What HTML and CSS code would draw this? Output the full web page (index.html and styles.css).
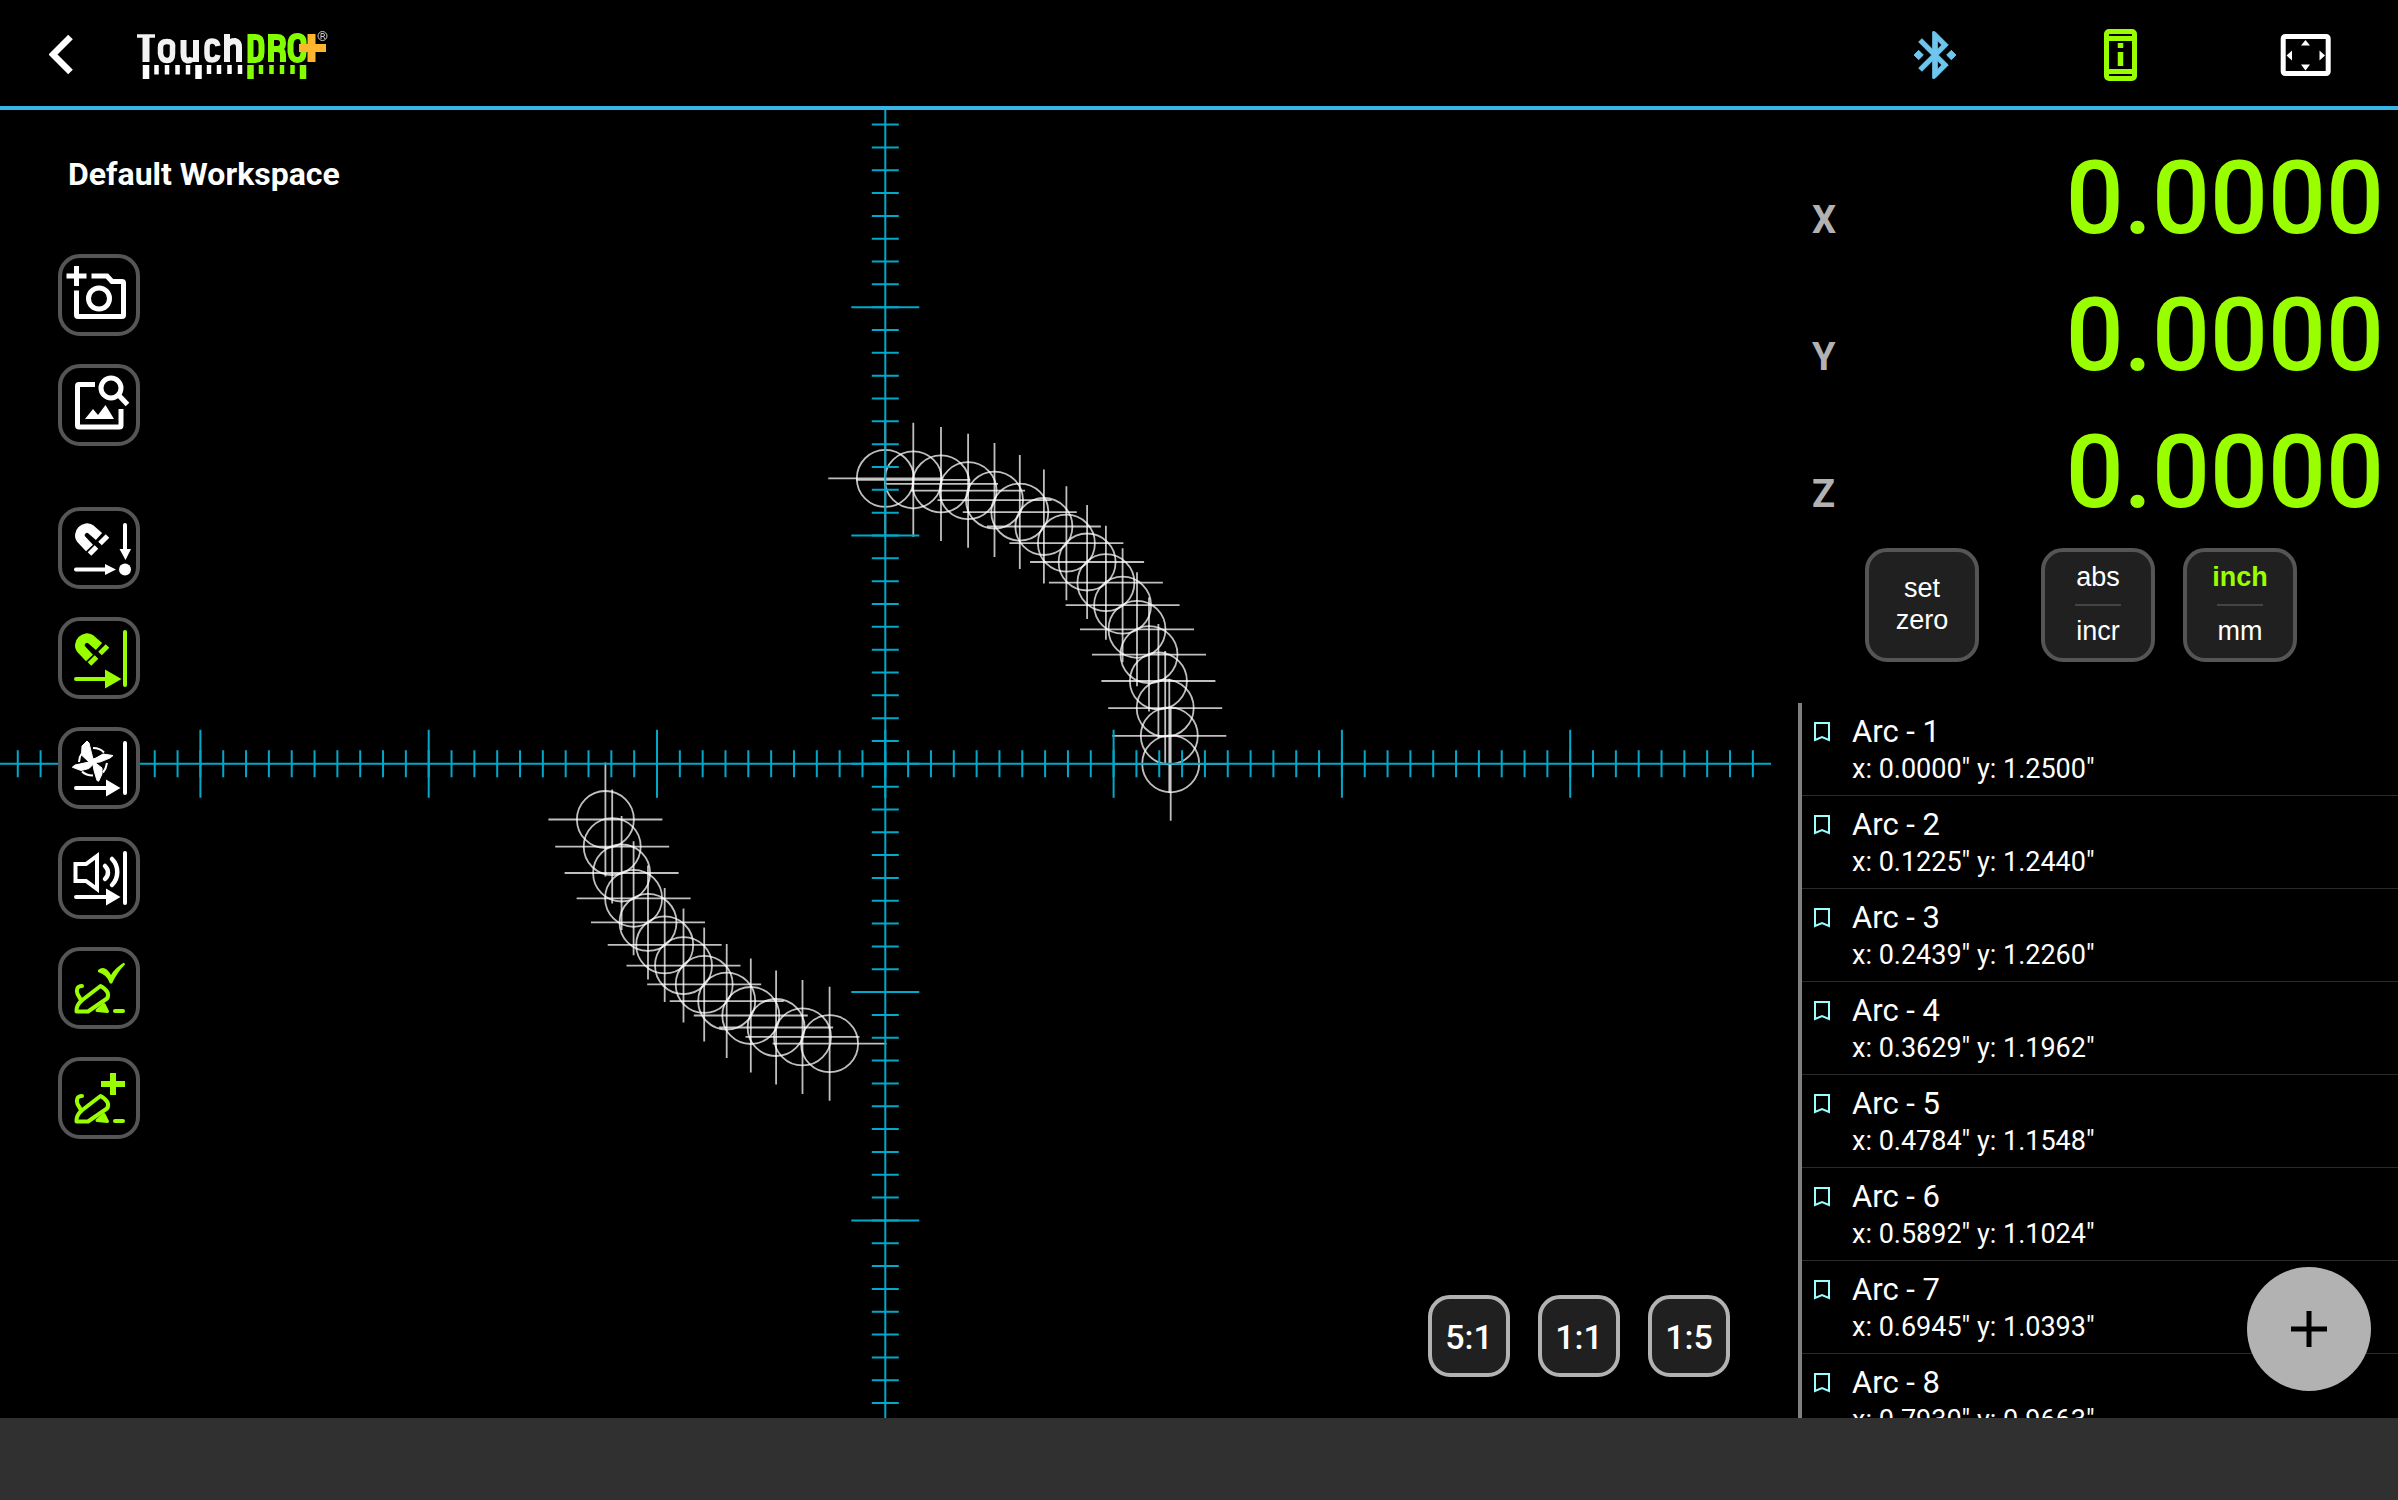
FILE: index.html
```html
<!DOCTYPE html>
<html lang="en">
<head>
<meta charset="utf-8">
<meta name="viewport" content="width=device-width, initial-scale=1">
<title>TouchDRO</title>
<link rel="stylesheet" href="styles.css">
</head>
<body>
<header class="topbar">
  <button class="icon-btn back" aria-label="Back">
    <svg width="26" height="42" viewBox="0 0 26 42"><path d="M21.500 3 4 20.500 21.500 38" fill="none" stroke="#fff" stroke-width="6.500"/></svg>
  </button>
  <a class="logo" href="#" aria-label="TouchDRO plus">
    <svg width="194" height="52" viewBox="0 0 194 52">
      <g fill="none" stroke="#f2f2f2" stroke-width="7">
        <path d="M0 5h18" stroke-width="3.500"/><path d="M9 4v27"/>
        <path d="M23.500 16.500q0-6 6.500-6t5.500 6v6q0 7-5.500 7t-6.500-7z" stroke-width="5.500"/>
        <path d="M46.500 9v13q0 7 3.500 7.500 4 .5 5-3M59 9v22" stroke-width="6"/>
        <path d="M81 15q-1-5-6-5t-5 6v7q0 6 5 6t6-5" stroke-width="5.500"/>
        <path d="M90 3v28M90 14q3-4 8-4 4 1 4 6v15" stroke-width="6"/>
      </g>
      <g fill="none" stroke="#84ff00" stroke-width="6">
        <path d="M113.500 6h5q6 0 6 8v7q0 8-6 8h-5z"/>
        <path d="M134 31V3M134 6h6q6 0 6 6t-6 6h-6M140 18q6 0 6 6v7"/>
        <path d="M153.500 14q0-9 7-9t6 9v7q0 8-6 8t-7-8z"/>
      </g>
      <path d="M174.500 3v28M162 17h27" stroke="#ffb52e" stroke-width="8"/>
      <circle cx="185.500" cy="5" r="4.500" fill="none" stroke="#ccc" stroke-width="1"/>
      <path d="M184 8V2.500h2q1.500 0 1.500 1.500t-1.500 1.500H184m2.500 0 1.500 2.500" fill="none" stroke="#ccc" stroke-width="1"/>
      <path d="M9 34v14M61.500 34v14" stroke="#fff" stroke-width="6.500"/>
      <path d="M19.500 34v9.500M30 34v9.500M40.500 34v9.500M51 34v9.500M72 34v9M82 34v9M92.500 34v9M103 34v9" stroke="#fff" stroke-width="4.500"/>
      <path d="M113.500 34v14M166 34v14" stroke="#84ff00" stroke-width="6.500"/>
      <path d="M124 34v9M134.500 34v9M145 34v9M155.500 34v9" stroke="#84ff00" stroke-width="4.500"/>
    </svg>
  </a>
  <nav class="actions">
    <button class="icon-btn" aria-label="Bluetooth">
      <svg width="56" height="56" viewBox="0 0 24 24" fill="#6ec6ee" stroke="#6ec6ee" stroke-width=".4"><path d="M7 12l-2-2-2 2 2 2 2-2zm10.710-4.290L12 2h-1v7.590L6.410 5 5 6.410 10.590 12 5 17.590 6.410 19 11 14.410V22h1l5.710-5.710-4.300-4.290 4.300-4.290zM13 5.830l1.880 1.880L13 9.590V5.830zm1.880 10.460L13 18.170v-3.760l1.880 1.880zM19 10l-2 2 2 2 2-2-2-2z"/></svg>
    </button>
    <button class="icon-btn" aria-label="Device information">
      <svg width="56" height="56" viewBox="0 0 56 56"><rect x="14.500" y="4.500" width="28" height="47" rx="2.500" fill="none" stroke="#9f0" stroke-width="5"/><path d="M16 11.500h25M16 44.500h25" stroke="#9f0" stroke-width="5"/><path d="M28.500 16v5M28.500 25v14" stroke="#9f0" stroke-width="5.500"/></svg>
    </button>
    <button class="icon-btn" aria-label="Fit to screen">
      <svg width="56" height="56" viewBox="0 0 56 56"><rect x="6.200" y="9.500" width="45" height="37" rx="2" fill="none" stroke="#fff" stroke-width="5"/><path d="M24 18.500h9l-4.500-5.500zM24 37.500h9l-4.500 6zM15 23.500v10l-5.500-5zM42.500 23.500v10l5.500-5z" fill="#fff"/></svg>
    </button>
  </nav>
</header>

<main class="workspace">
  <section class="canvas" aria-label="Plot">
    <svg class="plot" viewBox="-885.300 -653.800 1771 1308" preserveAspectRatio="xMidYMid slice">
      <defs>
        <g id="hole"><circle r="28.500"/><path d="M-57 0H57M0-57V57"/></g>
      </defs>
      <g class="holes">
        <use href="#hole" x="0" y="-285.400"/><use href="#hole" x="28" y="-284"/><use href="#hole" x="55.700" y="-279.900"/><use href="#hole" x="82.800" y="-273.100"/>
        <use href="#hole" x="109.200" y="-263.700"/><use href="#hole" x="134.500" y="-251.700"/><use href="#hole" x="158.600" y="-237.300"/><use href="#hole" x="181.100" y="-220.600"/>
        <use href="#hole" x="201.800" y="-201.800"/><use href="#hole" x="220.600" y="-181.100"/><use href="#hole" x="237.300" y="-158.600"/><use href="#hole" x="251.700" y="-134.500"/>
        <use href="#hole" x="263.700" y="-109.200"/><use href="#hole" x="273.100" y="-82.800"/><use href="#hole" x="279.900" y="-55.700"/><use href="#hole" x="284" y="-28"/><use href="#hole" x="285.400" y="0"/>
        <use href="#hole" x="-279.900" y="55.700"/><use href="#hole" x="-273.100" y="82.800"/><use href="#hole" x="-263.700" y="109.200"/><use href="#hole" x="-251.700" y="134.500"/>
        <use href="#hole" x="-237.300" y="158.600"/><use href="#hole" x="-220.600" y="181.100"/><use href="#hole" x="-201.800" y="201.800"/><use href="#hole" x="-181.100" y="220.600"/>
        <use href="#hole" x="-158.600" y="237.300"/><use href="#hole" x="-134.500" y="251.700"/><use href="#hole" x="-109.200" y="263.700"/><use href="#hole" x="-82.800" y="273.100"/><use href="#hole" x="-55.700" y="279.900"/>
      </g>
      <g class="axes">
        <path class="axis" d="M-1400 0H1400M0-1400V1400"/>
        <path class="minor" d="M-914.200 0H914.200M0-914.200V914.200"/>
        <path class="major" d="M-914.200 0H914.200M0-914.200V914.200"/>
      </g>
    </svg>

    <div class="tools">
      <h1 class="title">Default Workspace</h1>
      <div class="tool-group">
        <button class="tool" aria-label="Add snapshot">
          <svg viewBox="0 0 74 74" fill="none" stroke="#fff" stroke-width="5"><path d="M4.500 18h20M14.500 8v20M29.500 18H45l5 5.500h10q1.500 0 1.500 1.500v32q0 1.500-1.500 1.500H16q-1.500 0-1.500-1.500V32.500"/><circle cx="37" cy="40.500" r="10.500"/></svg>
        </button>
        <button class="tool" aria-label="View snapshots">
          <svg viewBox="0 0 74 74" fill="none" stroke="#fff" stroke-width="5"><path d="M33 16.500H17q-1.500 0-1.500 1.500v39.500q0 1.500 1.500 1.500h40.500q1.500 0 1.500-1.500V41"/><circle cx="49" cy="20" r="10"/><path d="m56 26.500 9.500 10"/><path d="m23 51 8-10 5 6 7.500-10L52 51z" fill="#fff" stroke="none"/></svg>
        </button>
      </div>
      <div class="tool-group">
        <button class="tool" aria-label="Snap to point">
          <svg viewBox="0 0 74 74" fill="none" stroke="#fff" stroke-width="4"><use href="#magnet"/><path d="M14 58.500h31M63 14v27" stroke-linecap="round"/><path d="M43 53v11l11-5.500zM57.500 38h11.500l-5.500 11z" fill="#fff" stroke="none"/><circle cx="63" cy="58.500" r="6" fill="#fff" stroke="none"/></svg>
        </button>
        <button class="tool" aria-label="Snap to line">
          <svg viewBox="0 0 74 74" fill="none" stroke="#9f0" stroke-width="4"><g id="magnet"><path d="m37 25.500-8-7c-6-5-15 4-9.500 10L27.500 37" stroke-width="9.500"/><path d="m38 32.500 7.500-7.500M27.500 43l7-7" stroke-width="5"/></g><path d="M14 58h31M63 11v53" stroke-linecap="round"/><path d="M43 48.500v19L59.500 58z" fill="#9f0" stroke="none"/></svg>
        </button>
        <button class="tool" aria-label="Cutter offset">
          <svg viewBox="0 0 74 74" fill="none" stroke="#fff" stroke-width="4"><path d="M31 17q7 0 11 4.500M45 32q-1 6-4 9.500M31 44.500q-7 0-11-4M17 31q0-5 3-9" stroke-width="2"/><path d="M25 10l2 2 4 16 3-1 7-4 10 1.500-3 2.500-10 4-5 .500 7 5.500v6l-3.300 7.200-1.700-.7-3-10-1-6-4 4-8 2-8.700-3.300 2.700-2.200 14-3-7.500-7 .5-9z" fill="#fff" stroke-width="1"/><path d="M14 57h31M63 12v50" stroke-linecap="round"/><path d="M44 48.500v17L58.500 57z" fill="#fff" stroke="none"/></svg>
        </button>
        <button class="tool" aria-label="Proximity sound">
          <svg viewBox="0 0 74 74" fill="none" stroke="#fff" stroke-width="4"><path d="M13.500 23H24l11-8v33l-11-8H13.500z"/><path d="M43 25c4 4 4 9 0 13M50 18c7 7 7 19 0 26" stroke-linecap="round" stroke-width="4.500"/><path d="M14 56h31M63 12v50" stroke-linecap="round"/><path d="M44 47.500v17L58.500 56z" fill="#fff" stroke="none"/></svg>
        </button>
        <button class="tool" aria-label="Apply tool">
          <svg viewBox="0 0 74 74" fill="none" stroke="#9f0" stroke-width="4"><g id="mill"><path d="M20 35c-5 0-6 4-4.500 8l4 7M38.500 35 19 50c-3 3-5 6-4.500 10.500H26l19-13c3-4 0-9-6.500-12.500z" stroke-linejoin="round" stroke-linecap="round"/><path d="m35 59.500 7-6 3.500 7z" fill="#9f0" stroke-width="3" stroke-linejoin="round"/><path d="M53 60h8" stroke-linecap="round"/></g><path d="M36 19q7-6 13 5 4-7 13-12.500l1 2q-8 8-13 19h-2q-3-9-12-11.500z" fill="#9f0" stroke="none"/></svg>
        </button>
        <button class="tool" aria-label="Add tool">
          <svg viewBox="0 0 74 74" fill="none" stroke="#9f0" stroke-width="4"><use href="#mill"/><path d="M39 23h24M51 12v22" stroke-width="6"/></svg>
        </button>
      </div>
    </div>

    <div class="scales">
      <button class="scale">5:1</button>
      <button class="scale">1:1</button>
      <button class="scale">1:5</button>
    </div>
  </section>

  <aside class="side">
    <dl class="readout">
      <div class="axis-row"><dt>X</dt><dd>0.0000</dd></div>
      <div class="axis-row"><dt>Y</dt><dd>0.0000</dd></div>
      <div class="axis-row"><dt>Z</dt><dd>0.0000</dd></div>
    </dl>
    <div class="modes">
      <button class="mode zero">set<br>zero</button>
      <button class="mode split"><span>abs</span><span>incr</span></button>
      <button class="mode split"><span class="on">inch</span><span>mm</span></button>
    </div>
    <ul class="points">
      <li class="point"><svg class="mark" viewBox="0 0 18 22"><path d="M2 2h14v17l-7-3-7 3z"/></svg><div><p class="name">Arc - 1</p><p class="coords">x: 0.0000" y: 1.2500"</p></div></li>
      <li class="point"><svg class="mark" viewBox="0 0 18 22"><path d="M2 2h14v17l-7-3-7 3z"/></svg><div><p class="name">Arc - 2</p><p class="coords">x: 0.1225" y: 1.2440"</p></div></li>
      <li class="point"><svg class="mark" viewBox="0 0 18 22"><path d="M2 2h14v17l-7-3-7 3z"/></svg><div><p class="name">Arc - 3</p><p class="coords">x: 0.2439" y: 1.2260"</p></div></li>
      <li class="point"><svg class="mark" viewBox="0 0 18 22"><path d="M2 2h14v17l-7-3-7 3z"/></svg><div><p class="name">Arc - 4</p><p class="coords">x: 0.3629" y: 1.1962"</p></div></li>
      <li class="point"><svg class="mark" viewBox="0 0 18 22"><path d="M2 2h14v17l-7-3-7 3z"/></svg><div><p class="name">Arc - 5</p><p class="coords">x: 0.4784" y: 1.1548"</p></div></li>
      <li class="point"><svg class="mark" viewBox="0 0 18 22"><path d="M2 2h14v17l-7-3-7 3z"/></svg><div><p class="name">Arc - 6</p><p class="coords">x: 0.5892" y: 1.1024"</p></div></li>
      <li class="point"><svg class="mark" viewBox="0 0 18 22"><path d="M2 2h14v17l-7-3-7 3z"/></svg><div><p class="name">Arc - 7</p><p class="coords">x: 0.6945" y: 1.0393"</p></div></li>
      <li class="point"><svg class="mark" viewBox="0 0 18 22"><path d="M2 2h14v17l-7-3-7 3z"/></svg><div><p class="name">Arc - 8</p><p class="coords">x: 0.7930" y: 0.9663"</p></div></li>
    </ul>
    <button class="fab" aria-label="Add point"><svg width="40" height="40" viewBox="0 0 40 40"><path d="M2 20h36M20 2v36" stroke="#000" stroke-width="5"/></svg></button>
  </aside>
</main>
<footer class="navbar"></footer>
</body>
</html>
```

FILE: styles.css
```css
* {
  box-sizing: border-box;
}

body {
  margin: 0;
  height: 100vh;
  display: flex;
  flex-direction: column;
  background: #000;
  color: #fff;
  font-family: Roboto, "Liberation Sans", sans-serif;
}

h1, p, dl, dd, ul {
  margin: 0;
  padding: 0;
}

button {
  margin: 0;
  padding: 0;
  border: 0;
  background: none;
  color: inherit;
  font: inherit;
  cursor: pointer;
}

svg {
  display: block;
}

.topbar {
  flex: none;
  display: flex;
  align-items: center;
  height: 110px;
  padding: 3px 65px 0 49px;
  border-bottom: 4px solid #38b5e6;
}

.logo {
  margin: 4px 0 0 62px;
}

.actions {
  display: flex;
  gap: 129px;
  margin-left: auto;
}

.workspace {
  flex: 1;
  min-height: 0;
  display: grid;
  grid-template-columns: minmax(0, 1fr) 600px;
  column-gap: 27px;
}

.canvas {
  position: relative;
  min-height: 0;
  display: flex;
  justify-content: space-between;
  overflow: hidden;
}

.plot {
  position: absolute;
  inset: 0;
  width: 100%;
  height: 100%;
}

.holes {
  fill: none;
  stroke: #fff;
  stroke-opacity: 0.75;
  stroke-width: 1.8;
}

.axes {
  fill: none;
  stroke: #00a9c9;
}

.axis {
  stroke-width: 2;
}

.minor {
  stroke-width: 27;
  stroke-dasharray: 2 20.83;
}

.major {
  stroke-width: 68;
  stroke-dasharray: 2 226.3;
}

.tools {
  position: relative;
  padding: 46px 0 0 58px;
}

.title {
  margin: 0 0 62px 10px;
  font-size: 32px;
  line-height: 36px;
  font-weight: 700;
}

.tool-group {
  display: flex;
  flex-direction: column;
  gap: 28px;
}

.tool-group + .tool-group {
  margin-top: 61px;
}

.tool {
  width: 82px;
  height: 82px;
  border: 4px solid #555;
  border-radius: 22px;
  background: #000;
}

.scales {
  position: relative;
  align-self: flex-end;
  display: flex;
  gap: 28px;
  padding: 0 41px 41px 0;
}

.scale {
  width: 82px;
  height: 82px;
  padding-top: 2px;
  border: 4px solid #b2b2b2;
  border-radius: 22px;
  background: #202020;
  font-size: 34px;
  font-weight: 500;
}

.side {
  position: relative;
  min-height: 0;
  display: flex;
  flex-direction: column;
}

.readout {
  padding: 20px 14px 0 14px;
}

.axis-row {
  display: flex;
  align-items: baseline;
  justify-content: space-between;
  height: 137px;
  color: #b2b2b2;
  font-size: 38px;
  font-weight: 700;
}

.axis-row dd {
  color: #9f0;
  font-size: 102px;
  line-height: 137px;
  font-weight: 500;
}

.modes {
  display: flex;
  gap: 28px;
  margin: 7px 0 41px 67px;
}

.mode {
  width: 114px;
  height: 114px;
  padding-bottom: 2px;
  border: 4px solid #555;
  border-radius: 22px;
  background: #202020;
  font-family: "Liberation Sans", sans-serif;
  font-size: 27px;
  line-height: 32px;
}

.zero {
  margin-right: 34px;
}

.split {
  display: flex;
  flex-direction: column;
  align-items: center;
  justify-content: center;
}

.split span + span {
  width: 46px;
  margin-top: 11px;
  padding-top: 9px;
  border-top: 2px solid #444;
}

.on {
  color: #9f0;
  font-weight: 700;
}

.points {
  flex: 1;
  min-height: 0;
  overflow: hidden;
  border-left: 4px solid #808080;
  list-style: none;
}

.point {
  display: flex;
  gap: 21px;
  height: 93px;
  padding: 10px 0 0 11px;
  border-bottom: 1px solid #2a2a2a;
}

.mark {
  flex: none;
  width: 18px;
  height: 22px;
  margin-top: 8px;
  fill: none;
  stroke: #9ff;
  stroke-width: 2;
}

.name {
  font-size: 31px;
  line-height: 38px;
}

.coords {
  font-size: 27px;
  line-height: 36px;
}

.fab {
  position: absolute;
  right: 27px;
  bottom: 27px;
  display: grid;
  place-items: center;
  width: 124px;
  height: 124px;
  border-radius: 50%;
  background: #b2b2b2;
}

.navbar {
  flex: none;
  height: 82px;
  background: #303030;
}
```
